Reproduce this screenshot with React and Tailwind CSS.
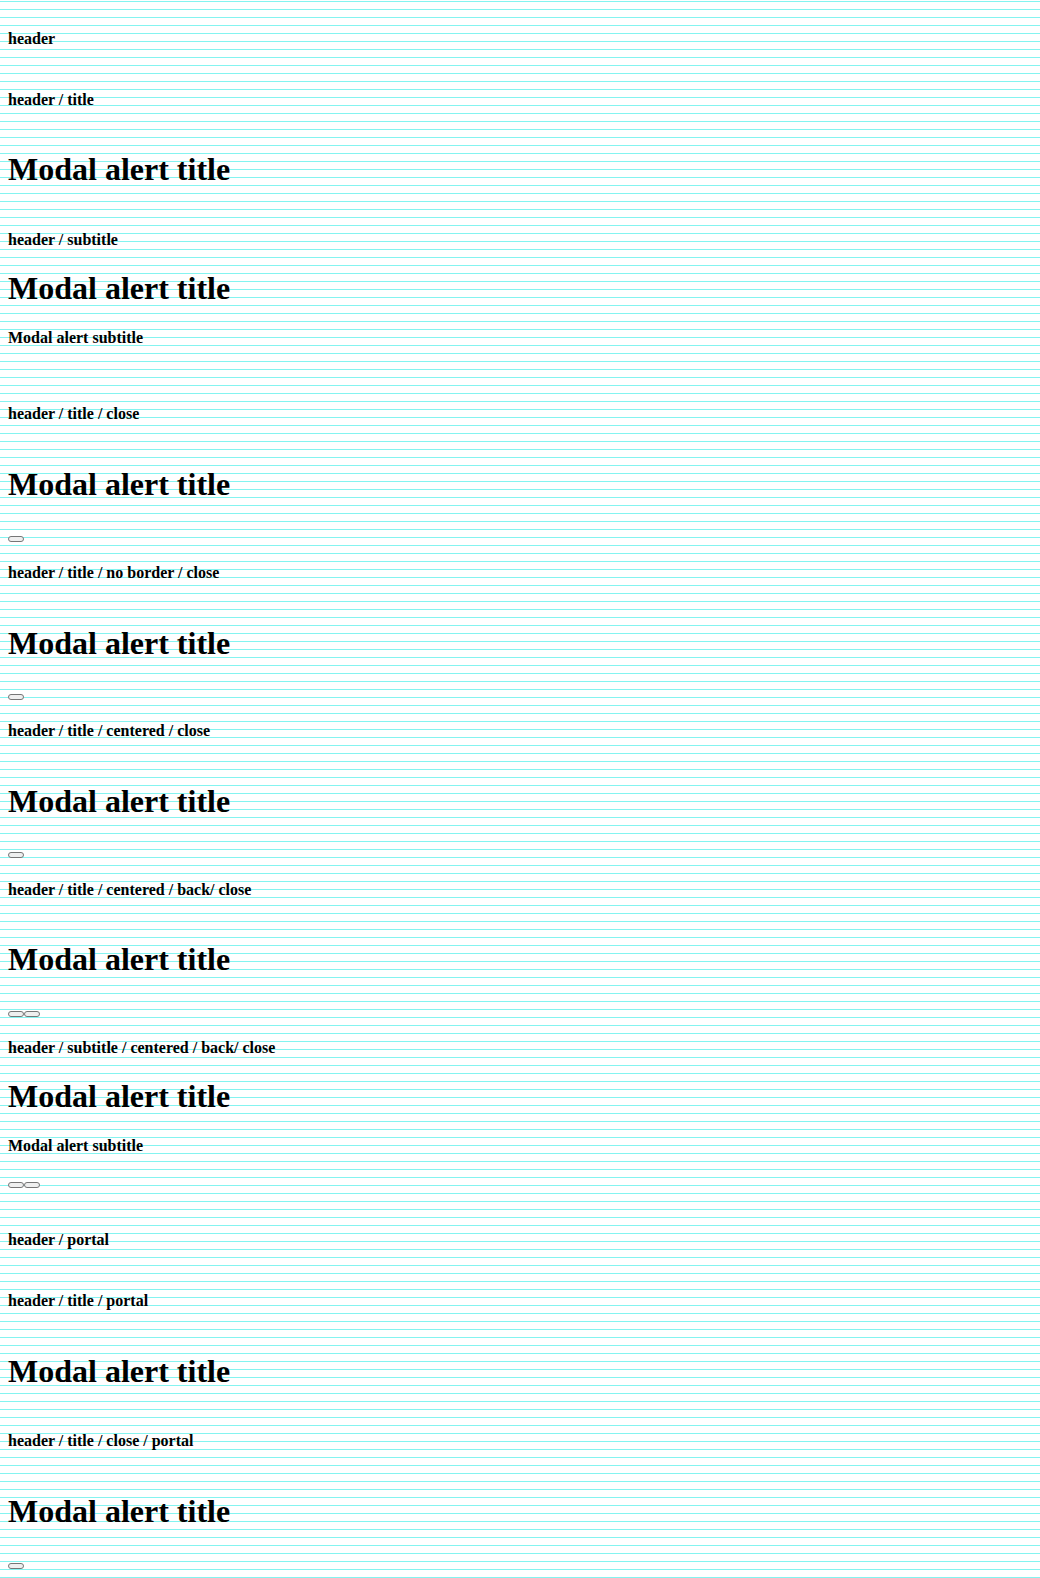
import React from 'react';

const Label = ({ children, className = '' }) => (
  <div className={`text-base font-bold leading-[18px] ${className}`}>{children}</div>
);

const Title = ({ className = '' }) => (
  <div className={`text-[32px] font-bold leading-[37px] ${className}`}>Modal alert title</div>
);

const Subtitle = ({ className = '' }) => (
  <div className={`text-base font-bold leading-[18px] ${className}`}>Modal alert subtitle</div>
);

const Btn = () => (
  <button className="block w-4 h-[6px] rounded-[3px] border border-[#767676] bg-[#efefef]" />
);

export default function App() {
  return (
    <div className="min-h-[1578px] w-full px-2 pt-[30px] text-black font-['Liberation_Serif',serif] bg-white bg-[image:repeating-linear-gradient(to_bottom,transparent_0px,transparent_1px,#84f4f0_1px,#84f4f0_2px,transparent_2px,transparent_8px)]">
      {/* header */}
      <Label>header</Label>

      {/* header / title */}
      <Label className="mt-[43px]">header / title</Label>
      <Title className="mt-[42px]" />

      {/* header / subtitle */}
      <Label className="mt-[43px]">header / subtitle</Label>
      <Title className="mt-[21px]" />
      <Subtitle className="mt-[22px]" />

      {/* header / title / close */}
      <Label className="mt-[57.5px]">header / title / close</Label>
      <Title className="mt-[43px]" />
      <div className="mt-[33px] flex"><Btn /></div>

      <Label className="mt-[22px]">header / title / no border / close</Label>
      <Title className="mt-[43px]" />
      <div className="mt-[32.5px] flex"><Btn /></div>

      <Label className="mt-[21.5px]">header / title / centered / close</Label>
      <Title className="mt-[43px]" />
      <div className="mt-[32.5px] flex"><Btn /></div>

      <Label className="mt-[23px]">header / title / centered / back/ close</Label>
      <Title className="mt-[42px]" />
      <div className="mt-[33px] flex"><Btn /><Btn /></div>

      <Label className="mt-[22px]">header / subtitle / centered / back/ close</Label>
      <Title className="mt-[21px]" />
      <Subtitle className="mt-[22px]" />
      <div className="mt-[27px] flex"><Btn /><Btn /></div>

      {/* portal variants */}
      <Label className="mt-[42.5px]">header / portal</Label>

      <Label className="mt-[43px]">header / title / portal</Label>
      <Title className="mt-[43px]" />

      <Label className="mt-[42px]">header / title / close / portal</Label>
      <Title className="mt-[43px]" />
      <div className="mt-[33px] flex"><Btn /></div>
    </div>
  );
}
